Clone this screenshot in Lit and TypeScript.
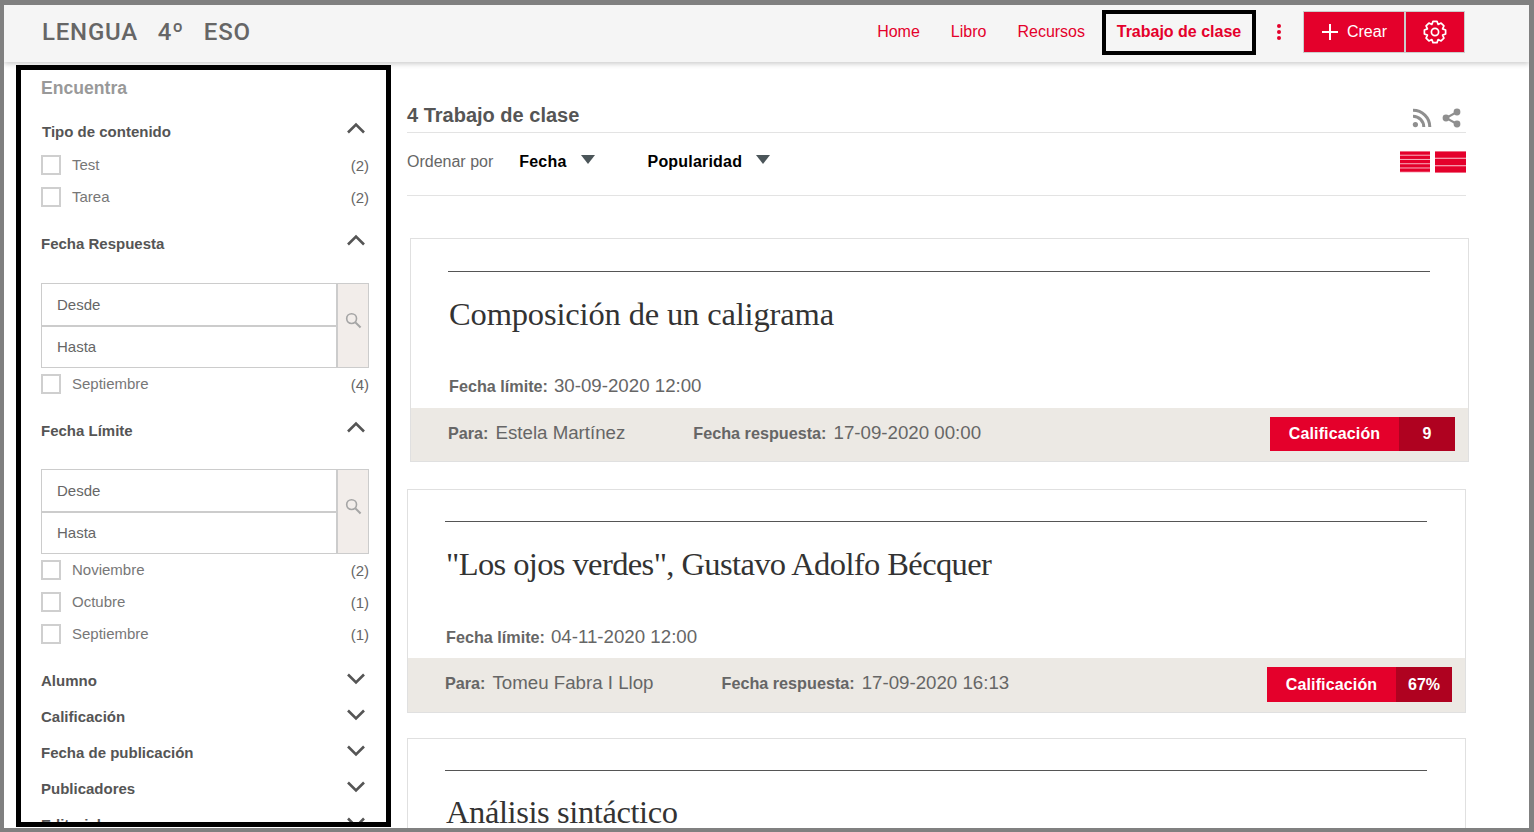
import { LitElement, html, css, svg } from "lit";
import { customElement } from "lit/decorators.js";

const up = html`<svg class="chev up" viewBox="0 0 20 12"><path d="M2 10.5 L10 2.5 L18 10.5" fill="none" stroke="#555" stroke-width="2.6"/></svg>`;
const down = html`<svg class="chev dn" viewBox="0 0 20 12"><path d="M2 1.5 L10 9.5 L18 1.5" fill="none" stroke="#555" stroke-width="2.6"/></svg>`;
const lens = html`<svg class="lens" viewBox="0 0 18 18"><circle cx="7" cy="7" r="5.2" fill="none" stroke="#a5a5a5" stroke-width="1.7"/><path d="M11 11 L16.5 16.5" stroke="#a5a5a5" stroke-width="2.2"/></svg>`;

const head = (t: string, open: boolean, cls = "") => html`<div class="head ${cls}"><span>${t}</span>${open ? up : down}</div>`;
const row = (t: string, n: number) => html`<div class="row"><span class="box"></span><span class="lab">${t}</span><span class="cnt">(${n})</span></div>`;
const dates = (cls = "") => html`<div class="dates ${cls}"><div class="inputs"><div class="inp">Desde</div><div class="inp">Hasta</div></div><div class="go">${lens}</div></div>`;

const gearPath = (() => {
  const pts: string[] = [];
  const teeth = 8;
  for (let i = 0; i < teeth; i++) {
    const a = (i * 2 * Math.PI) / teeth - Math.PI / 2;
    const step = (2 * Math.PI) / teeth;
    const offs: [number, number][] = [[-0.5, 8.2], [-0.24, 10.8], [0.24, 10.8], [0.5, 8.2]];
    for (const [o, r] of offs) {
      const t = a + o * step;
      pts.push(`${(12 + r * Math.cos(t)).toFixed(2)} ${(12 + r * Math.sin(t)).toFixed(2)}`);
    }
  }
  return "M" + pts.join("L") + "Z";
})();

const cards = [
  { t: "Composición de un caligrama", lim: "30-09-2020 12:00", para: "Estela Martínez", res: "17-09-2020 00:00", cal: "9", cls: "c1" },
  { t: "\"Los ojos verdes\", Gustavo Adolfo Bécquer", lim: "04-11-2020 12:00", para: "Tomeu Fabra I Llop", res: "17-09-2020 16:13", cal: "67%", cls: "c2" },
];

@customElement("app-root")
export class AppRoot extends LitElement {
  static styles = css`
    :host { display: block; width: 1534px; height: 832px; font-family: "Liberation Sans", Arial, sans-serif; color: #666; }
    * { box-sizing: border-box; }
    .frame { width: 1534px; height: 832px; border: solid #808080; border-width: 5px 5px 4px 4px; background: #fff; overflow: hidden; display: flex; flex-direction: column; }
    header { flex: none; height: 57px; background: #f5f5f5; box-shadow: 0 2px 5px rgba(0,0,0,.2); display: flex; align-items: center; padding: 0 64px 3px 38px; position: relative; z-index: 2; }
    .logo { font-family: Roboto, sans-serif; font-weight: 500; font-size: 24px; letter-spacing: .8px; color: #666; word-spacing: 13px; margin-right: auto; }
    .nav { font-size: 16px; color: #e4002b; margin-right: 31px; }
    .nav.cur { margin: 0 0 0 -14px; border: 4px solid #000; height: 45px; width: 154px; display: flex; align-items: center; justify-content: center; font-weight: 700; }
    .dots { margin: 0 22px 0 21px; width: 4px; display: flex; flex-direction: column; gap: 2px; }
    .dots i { width: 4px; height: 4px; border-radius: 50%; background: #e4002b; }
    .btn { height: 42px; background: #e4002b; border: 1px solid #ccc; color: #fff; display: flex; align-items: center; justify-content: center; font-size: 16px; }
    .crear { width: 102px; gap: 8px; }
    .gear { width: 60px; border-left: 1px solid #ccc; }
    .body { flex: 1; min-height: 0; display: flex; overflow: hidden; }
    aside { flex: none; width: 375px; height: 762px; margin: 3px 0 0 12px; border: 5px solid #000; padding: 0 17px 0 20px; overflow: hidden; }
    .enc { height: 37px; line-height: 36px; font-size: 17.6px; font-weight: 700; color: #999; }
    .head { height: 36px; margin-top: 7px; padding: 0 3px 2px 0; display: flex; align-items: center; justify-content: space-between; font-size: 15px; font-weight: 700; color: #555; }
    .head.tight { margin-top: 0; }
    .head.nudge span { margin-left: 1px; }
    .chev { width: 20px; height: 12px; }
    .chev.up { margin-top: -6px; }
    .chev.dn { margin-top: -2px; }
    .row { height: 32px; display: flex; font-size: 15px; color: #777; }
    .first { margin-top: 5px; }
    .box { flex: none; width: 20px; height: 20px; border: 2px solid #cfcfcf; background: #fff; }
    .lab { margin-left: 11px; line-height: 20px; }
    .cnt { margin-left: auto; line-height: 22px; color: #666; }
    .dates { height: 85px; margin: 20px 0 6px; display: flex; border: 1px solid #ccc; }
    .dates.d1 { margin-top: 21px; }
    .inputs { flex: 1; display: flex; flex-direction: column; }
    .inp { flex: 1; padding-left: 15px; display: flex; align-items: center; font-size: 15px; color: #666; }
    .inp + .inp { border-top: 2px solid #ccc; }
    .go { width: 32px; background: #f2edea; border-left: 2px solid #ccc; display: flex; align-items: center; justify-content: center; padding: 0 0 10px 1px; }
    .lens { width: 17px; height: 17px; }
    main { flex: 1; min-width: 0; margin: 0 63px 0 16px; }
    .title { height: 71px; border-bottom: 1px solid #e3e3e3; display: flex; align-items: flex-end; justify-content: space-between; padding-bottom: 5px; font-size: 20px; font-weight: 700; color: #555; }
    .icons { display: flex; gap: 10px; padding-right: 5px; margin-bottom: -1px; }
    .sort { height: 63px; border-bottom: 1px solid #e3e3e3; display: flex; align-items: center; font-size: 16px; padding-bottom: 4px; }
    .sort b { color: #000; letter-spacing: .2px; }
    .tri { width: 0; height: 0; border: solid transparent; border-width: 9px 7.5px 0; border-top-color: #4b5559; margin: -6px 0 0 14px; }
    .ord { margin-right: 26px; }
    .gap2 { margin-left: 53px; }
    .views { margin-left: auto; display: flex; gap: 5px; }
    .card { height: 224px; border: 1px solid #e0e0e0; display: flex; flex-direction: column; }
    .c1 { margin: 42px -3px 0 3px; }
    .c2 { margin-top: 27px; }
    .c3 { margin-top: 25px; }
    .top { margin: 32px 38px 0 37px; border-top: 1px solid #555; flex: 1; min-height: 0; display: flex; flex-direction: column; }
    .c2 .top, .c3 .top { margin-top: 31px; }
    h2 { margin: 19px 0 0; padding-left: 1px; font: 400 32.5px/46px "Liberation Serif", serif; color: #333; letter-spacing: -.15px; }
    .c2 h2 { letter-spacing: -.6px; }
    .c3 h2 { margin-top: 18px; letter-spacing: -.4px; }
    .lim { margin-top: auto; padding: 0 0 11px 1px; display: flex; align-items: baseline; }
    .c2 .lim { padding-bottom: 10px; }
    .k { font-size: 16.2px; font-weight: 700; color: #666; margin-right: 7px; }
    .lim .k { margin-right: 6px; }
    .v { font-size: 18.7px; color: #666; }
    .foot { flex: none; height: 53px; background: #ece9e4; display: flex; align-items: center; padding: 0 13px 0 37px; }
    .c2 .foot { height: 54px; }
    .pair { display: flex; align-items: baseline; margin-right: 68px; padding-bottom: 4px; }
    .badge { margin: -1px 0 0 auto; height: 34px; width: 185px; display: flex; font-size: 16px; font-weight: 700; color: #fff; }
    .c2 .badge { height: 35px; }
    .badge span { display: flex; align-items: center; justify-content: center; }
    .badge .n { flex: 1; background: #e4002b; letter-spacing: .15px; }
    .badge .s { width: 56px; background: #af0220; }
  `;

  render() {
    const bands = [0, 4.25, 8.5, 12.75, 17];
    return html`<div class="frame">
      <header>
        <div class="logo">LENGUA 4º ESO</div>
        <div class="nav">Home</div><div class="nav">Libro</div><div class="nav">Recursos</div>
        <div class="nav cur">Trabajo de clase</div>
        <div class="dots"><i></i><i></i><i></i></div>
        <div class="btn crear"><svg width="18" height="18" viewBox="0 0 18 18"><path d="M9 1V17M1 9H17" stroke="#fff" stroke-width="2"/></svg>Crear</div>
        <div class="btn gear"><svg width="24" height="24" viewBox="0 0 24 24" fill="none" stroke="#fff" stroke-width="1.7" stroke-linejoin="round"><circle cx="12" cy="12" r="3.6"/><path d="${gearPath}"/></svg></div>
      </header>
      <div class="body">
        <aside>
          <div class="enc">Encuentra</div>
          ${head("Tipo de contenido", true, "nudge")}
          <div class="first"></div>
          ${row("Test", 2)}${row("Tarea", 2)}
          ${head("Fecha Respuesta", true)}
          ${dates("d1")}
          ${row("Septiembre", 4)}
          ${head("Fecha Límite", true)}
          ${dates()}
          ${row("Noviembre", 2)}${row("Octubre", 1)}${row("Septiembre", 1)}
          ${head("Alumno", false)}
          ${head("Calificación", false, "tight")}
          ${head("Fecha de publicación", false, "tight")}
          ${head("Publicadores", false, "tight")}
          ${head("Editorial", false, "tight")}
        </aside>
        <main>
          <div class="title"><span>4 Trabajo de clase</span>
            <div class="icons">
              <svg width="20" height="20" viewBox="0 0 20 20" fill="none" stroke="#8f8f8f" stroke-width="3"><circle cx="3.4" cy="16.6" r="2.6" fill="#8f8f8f" stroke="none"/><path d="M1 8.2A10.8 10.8 0 0 1 11.8 19"/><path d="M1 2.2A16.8 16.8 0 0 1 17.8 19"/></svg>
              <svg width="19" height="20" viewBox="0 0 19 20"><path d="M15 4 L4 10 L15 16" fill="none" stroke="#8f8f8f" stroke-width="2"/><circle cx="15" cy="4" r="3.4" fill="#8f8f8f"/><circle cx="4" cy="10" r="3.4" fill="#8f8f8f"/><circle cx="15" cy="16" r="3.4" fill="#8f8f8f"/></svg>
            </div>
          </div>
          <div class="sort">
            <span class="ord">Ordenar por</span><b>Fecha</b><span class="tri"></span>
            <b class="gap2">Popularidad</b><span class="tri"></span>
            <div class="views">
              <svg width="30" height="22" viewBox="0 0 30 21"><rect width="30" height="21" fill="#f7a8b8"/>${bands.map((y) => svg`<rect x="0" y="${y}" width="30" height="3.2" fill="#e4002b"/>`)}</svg>
              <svg width="31" height="22" viewBox="0 0 31 21"><rect width="31" height="21" fill="#f7a8b8"/><rect y="0" width="31" height="6.2" fill="#e4002b"/><rect y="7.4" width="31" height="6.2" fill="#e4002b"/><rect y="14.8" width="31" height="6.2" fill="#e4002b"/></svg>
            </div>
          </div>
          ${cards.map((c) => html`<div class="card ${c.cls}">
            <div class="top"><h2>${c.t}</h2><div class="lim"><span class="k">Fecha límite:</span><span class="v">${c.lim}</span></div></div>
            <div class="foot">
              <div class="pair"><span class="k">Para:</span><span class="v">${c.para}</span></div>
              <div class="pair"><span class="k">Fecha respuesta:</span><span class="v">${c.res}</span></div>
              <div class="badge"><span class="n">Calificación</span><span class="s">${c.cal}</span></div>
            </div>
          </div>`)}
          <div class="card c3"><div class="top"><h2>Análisis sintáctico</h2></div></div>
        </main>
      </div>
    </div>`;
  }
}
